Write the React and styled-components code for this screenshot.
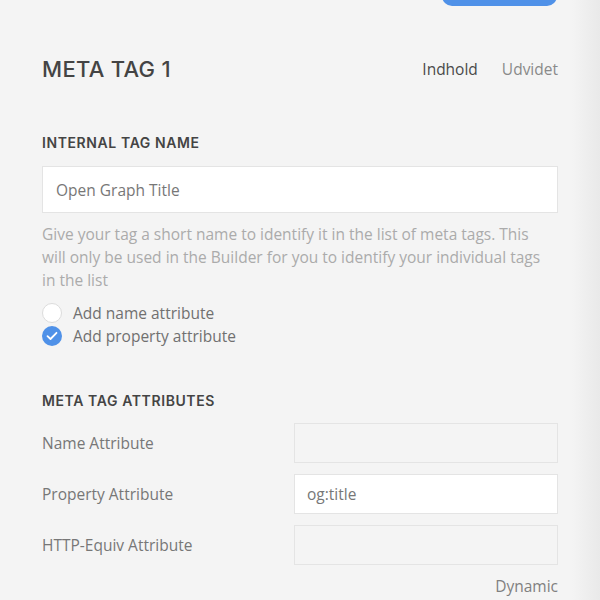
import React from 'react';
import styled, { createGlobalStyle } from 'styled-components';

const GlobalStyle = createGlobalStyle`
    html, body {
        margin: 0;
        padding: 0;
    }
    body {
        font-family: "Open Sans", "Liberation Sans", sans-serif;
        background: #f4f4f4;
    }
`;

const Page = styled.div`
    min-height: 600px;
    box-sizing: border-box;
    padding: 0 42px;
    background: linear-gradient(to right, #f4f4f4 0, #f4f4f4 572px, #e9e9e9 600px);
`;

const TopBar = styled.div`
    display: flex;
    justify-content: flex-end;
    align-items: flex-end;
    height: 6px;
    overflow: hidden;
    padding-right: 1px;
`;

const SaveButton = styled.button`
    width: 115px;
    height: 30px;
    border: none;
    border-radius: 10px;
    background: #4f91e8;
    flex-shrink: 0;
`;

const Header = styled.div`
    display: flex;
    justify-content: space-between;
    align-items: center;
    height: 40px;
    margin-top: 43px;
`;

const Title = styled.h1`
    margin: 0;
    font-family: "Inter", "Liberation Sans", sans-serif;
    font-weight: 500;
    font-size: 22px;
    letter-spacing: 0.3px;
    color: #444;
`;

const Tabs = styled.div`
    display: flex;
    gap: 24px;
`;

const Tab = styled.span`
    font-size: 15.5px;
    color: ${(p) => (p.$active ? '#4a4a4a' : '#8a8a8a')};
`;

const SectionTitle = styled.h2`
    margin: ${(p) => p.$top}px 0 0;
    line-height: 20px;
    font-family: "Inter", "Liberation Sans", sans-serif;
    font-weight: 600;
    font-size: 14px;
    letter-spacing: 0.6px;
    color: #444;
`;

const TextInput = styled.div`
    box-sizing: border-box;
    display: flex;
    align-items: center;
    height: ${(p) => p.$h}px;
    padding: 0 ${(p) => p.$pad}px;
    background: ${(p) => (p.$filled ? '#fff' : '#f4f4f4')};
    border: 1px solid #e4e4e4;
    font-size: 15.5px;
    color: #777;
`;

const NameInput = styled(TextInput)`
    margin-top: 13px;
`;

const Help = styled.p`
    margin: 10px 0 0;
    font-size: 15.5px;
    line-height: 23px;
    color: #ababab;
    padding-right: 10px;
`;

const Options = styled.div`
    margin-top: 9px;
    display: flex;
    flex-direction: column;
`;

const Option = styled.label`
    display: flex;
    align-items: center;
    gap: 11px;
    height: 23px;
    font-size: 15.5px;
    color: #707070;
`;

const Radio = styled.span`
    box-sizing: border-box;
    width: 20px;
    height: 20px;
    border-radius: 50%;
    display: flex;
    align-items: center;
    justify-content: center;
    background: ${(p) => (p.$checked ? '#4f91e8' : '#fff')};
    border: ${(p) => (p.$checked ? 'none' : '1px solid #dcdcdc')};
`;

const AttrGrid = styled.div`
    margin-top: 12px;
    display: grid;
    grid-template-columns: 1fr 264px;
    row-gap: 11px;
    align-items: center;
`;

const AttrLabel = styled.span`
    font-size: 15.5px;
    color: #777;
`;

const Dynamic = styled.div`
    margin-top: 11px;
    line-height: 20px;
    text-align: right;
    font-size: 15.5px;
    color: #808080;
`;

const Check = () => (
    <svg width="12" height="10" viewBox="0 0 12 10">
        <path d="M1.5 5.2 L4.5 8 L10.5 1.8" fill="none" stroke="#fff" strokeWidth="1.8" strokeLinecap="round" strokeLinejoin="round" />
    </svg>
);

const attributes = [
    { label: 'Name Attribute', value: '' },
    { label: 'Property Attribute', value: 'og:title' },
    { label: 'HTTP-Equiv Attribute', value: '' },
];

export default function App() {
    return (
        <Page>
            <GlobalStyle />
            <TopBar>
                <SaveButton />
            </TopBar>

            <Header>
                <Title>META TAG 1</Title>
                <Tabs>
                    <Tab $active>Indhold</Tab>
                    <Tab>Udvidet</Tab>
                </Tabs>
            </Header>

            <SectionTitle $top={44}>INTERNAL TAG NAME</SectionTitle>
            <NameInput $h={47} $pad={13} $filled>Open Graph Title</NameInput>
            <Help>
                Give your tag a short name to identify it in the list of meta tags. This
                will only be used in the Builder for you to identify your individual tags
                in the list
            </Help>

            <Options>
                <Option>
                    <Radio />
                    Add name attribute
                </Option>
                <Option>
                    <Radio $checked><Check /></Radio>
                    Add property attribute
                </Option>
            </Options>

            <SectionTitle $top={44}>META TAG ATTRIBUTES</SectionTitle>
            <AttrGrid>
                {attributes.map((a) => (
                    <React.Fragment key={a.label}>
                        <AttrLabel>{a.label}</AttrLabel>
                        <TextInput $h={40} $pad={12} $filled={!!a.value}>{a.value}</TextInput>
                    </React.Fragment>
                ))}
            </AttrGrid>
            <Dynamic>Dynamic</Dynamic>
        </Page>
    );
}
